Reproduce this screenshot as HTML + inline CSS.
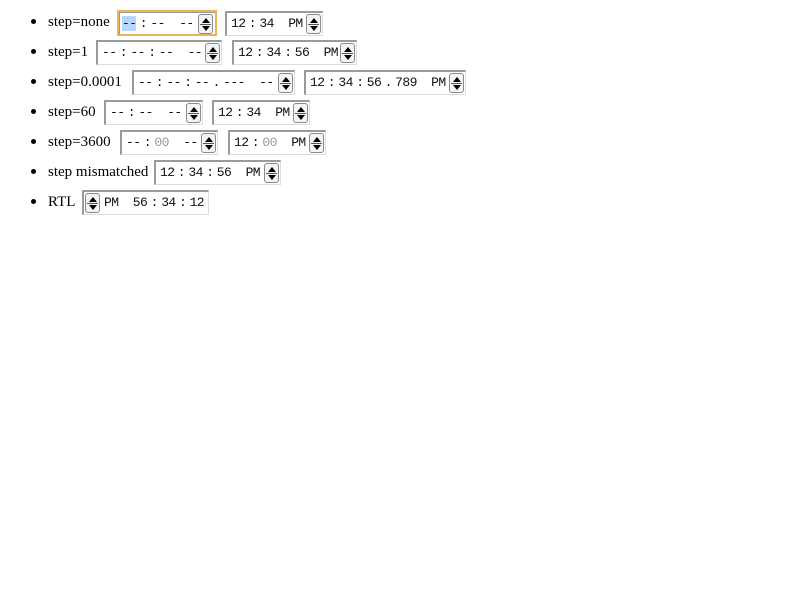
<!DOCTYPE html>
<html><head><style>
body{margin:0;background:#fff;width:800px;height:600px;position:relative;overflow:hidden;font-family:"Liberation Serif",serif;font-size:15px;color:#000}
.dot{position:absolute;left:31px;width:5px;height:5px;border-radius:50%;background:#000}
.lbl{position:absolute;left:48px;line-height:20px;white-space:pre}
.box{position:absolute;height:25px;box-sizing:border-box;border-top:2px solid #9a9a9a;border-left:2px solid #9a9a9a;border-right:1px solid #dcdcdc;border-bottom:1px solid #dcdcdc;background:#fff}
.t{position:absolute;top:2px;left:4px;font-family:"Liberation Mono",monospace;font-size:13px;letter-spacing:-0.6px;line-height:18px;white-space:pre;color:#111}
.c{padding:0 3.4px}
.sp{position:absolute;top:1px;right:1px;width:15px;height:20px;box-sizing:border-box;border:1px solid #8a8a8a;border-radius:3px;background:#f4f4f4}
.sp:before{content:"";position:absolute;left:3px;top:3px;border-left:4px solid transparent;border-right:4px solid transparent;border-bottom:5px solid #000}
.sp:after{content:"";position:absolute;left:3px;top:11px;border-left:4px solid transparent;border-right:4px solid transparent;border-top:5px solid #000}
.sp i{position:absolute;left:1px;right:1px;top:9px;height:1px;background:#555}
.g{color:#999}
.foc{border:2px solid #e9b45a;box-shadow:inset 1px 1px 0 #9a9a9a}
.hl{background:#b6d6fb}
</style></head><body>
<div class="dot" style="top:19px"></div><div class="lbl" style="top:12px">step=none</div>
<div class="box foc" style="left:117px;top:10px;width:100px;height:26px"><span class="t" style="left:3px;top:3px"><span class="hl">--</span><span class="c">:</span>--  --</span><div class="sp" style="top:2px;right:2px"><i></i></div></div>
<div class="box" style="left:225px;top:11px;width:98px"><span class="t">12<span class="c">:</span>34  PM</span><div class="sp"><i></i></div></div>

<div class="dot" style="top:49px"></div><div class="lbl" style="top:42px">step=1</div>
<div class="box" style="left:96px;top:40px;width:126px"><span class="t">--<span class="c">:</span>--<span class="c">:</span>--  --</span><div class="sp"><i></i></div></div>
<div class="box" style="left:232px;top:40px;width:125px"><span class="t">12<span class="c">:</span>34<span class="c">:</span>56  PM</span><div class="sp"><i></i></div></div>

<div class="dot" style="top:79px"></div><div class="lbl" style="top:72px">step=0.0001</div>
<div class="box" style="left:132px;top:70px;width:163px"><span class="t">--<span class="c">:</span>--<span class="c">:</span>--<span class="c">.</span>---  --</span><div class="sp"><i></i></div></div>
<div class="box" style="left:304px;top:70px;width:162px"><span class="t">12<span class="c">:</span>34<span class="c">:</span>56<span class="c">.</span>789  PM</span><div class="sp"><i></i></div></div>

<div class="dot" style="top:109px"></div><div class="lbl" style="top:102px">step=60</div>
<div class="box" style="left:104px;top:100px;width:99px"><span class="t">--<span class="c">:</span>--  --</span><div class="sp"><i></i></div></div>
<div class="box" style="left:212px;top:100px;width:98px"><span class="t">12<span class="c">:</span>34  PM</span><div class="sp"><i></i></div></div>

<div class="dot" style="top:139px"></div><div class="lbl" style="top:132px">step=3600</div>
<div class="box" style="left:120px;top:130px;width:98px"><span class="t">--<span class="c">:</span><span class="g">00</span>  --</span><div class="sp"><i></i></div></div>
<div class="box" style="left:228px;top:130px;width:98px"><span class="t">12<span class="c">:</span><span class="g">00</span>  PM</span><div class="sp"><i></i></div></div>

<div class="dot" style="top:169px"></div><div class="lbl" style="top:162px">step mismatched</div>
<div class="box" style="left:154px;top:160px;width:127px"><span class="t">12<span class="c">:</span>34<span class="c">:</span>56  PM</span><div class="sp"><i></i></div></div>

<div class="dot" style="top:199px"></div><div class="lbl" style="top:192px">RTL</div>
<div class="box" style="left:82px;top:190px;width:127px"><div class="sp" style="left:1px;right:auto"><i></i></div><span class="t" style="left:20px">PM  56<span class="c">:</span>34<span class="c">:</span>12</span></div>
</body></html>
